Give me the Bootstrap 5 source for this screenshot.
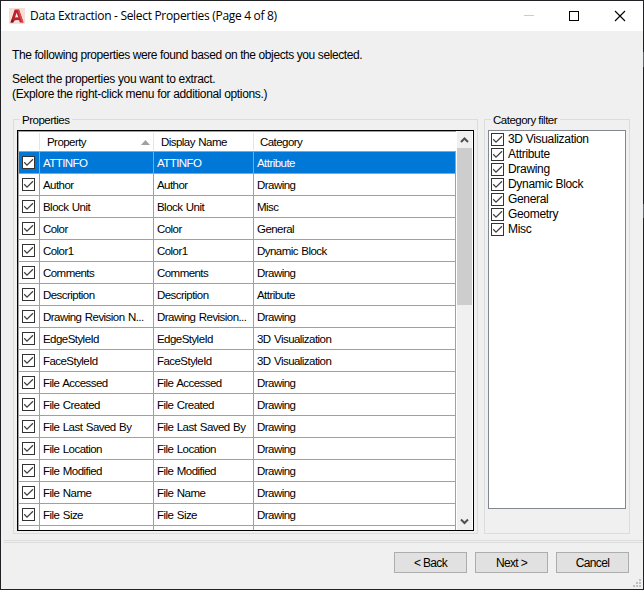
<!DOCTYPE html>
<html lang="en">
<head>
<meta charset="utf-8">
<title>Data Extraction</title>
<link href="https://cdn.jsdelivr.net/npm/bootstrap@5.3.0/dist/css/bootstrap.min.css" rel="stylesheet">
<style>
html,body{margin:0;overflow:hidden}
body{font:12px/15px "Liberation Sans",Arial,sans-serif;color:#000;background:#202025}
.win{width:644px;height:590px;padding:1px;background:#202025;letter-spacing:-.4px}
.client{background:#f0f0f0;padding-left:3px}
.titlebar{height:30px;padding:0 17px 0 8px}
.caption{font:12px/16px "Open Sans","Noto Sans",sans-serif;letter-spacing:-.31px;margin-left:5px}
.winbtns{gap:35px}
.winbtns svg{overflow:visible}
.intro{padding:17px 0 0 8px;height:88px}
.intro p{margin:0 0 9px;white-space:nowrap}
.intro p+p{letter-spacing:-.34px}
.boxes{padding-left:9px;gap:6px;height:421px}
.groupbox{border:1px solid #dcdcdc;height:415px;position:relative}
.groupbox legend{position:absolute;top:-7px;left:6px;width:auto;margin:0;padding:0 3px 0 2px;background:#f0f0f0;font-size:11.5px;line-height:15px;letter-spacing:-.5px;white-space:nowrap;float:none}
.g-props{width:465px;padding:10px 3px 2px}
.g-cats{width:146px;padding:10px 3px 0}
.gridbox{width:457px;height:401px;border:1px solid #000;background:#fff;overflow:hidden;font-size:11.5px;letter-spacing:-.55px;word-spacing:.8px}
.cells{width:438px;border-left:1px solid #a0a0a0;border-top:1px solid #a0a0a0}
.rowx{height:22px;border-bottom:1px solid #a0a0a0}
.rowx>div{border-right:1px solid #a0a0a0;height:22px;line-height:22px;padding-left:3px;white-space:nowrap}
.rowx.sel{background:#0078d7;color:#fff}
.rowx.head{height:20px}
.rowx.head>div{height:17px;margin-top:1px;border-color:#e5e5e5;line-height:19px;padding-left:7px}
.rowx.head>.c3{padding-left:6px}
.rowx.head>div:last-child{border-color:#fff}
.tri{margin:1px 3px 0 0}
.c0{width:21px}.c1{width:114px}.c2{width:100px}.c3{width:202px}
.rowx>.c0{padding:4px 0 0 3px}
.chk{display:block;width:13px;height:13px;flex:none}
.sbar{width:17px;background:#f0f0f0;border-left:1px solid #fff;border-right:1px solid #fff}
.thumb{height:157px;background:#cdcdcd}
.listbox{width:138px;height:379px;border:1px solid #828790;background:#fff;padding:1px 2px;letter-spacing:-.32px}
.listbox>div{height:15px;gap:4px;line-height:15px}
.sep{height:3px;border:solid #dcdcdc;border-width:1px 0;width:639px}
.actions{height:46px;padding:9px 14px 0 0;gap:8px}
.actions .btn{width:73px;height:21px;padding:1px 0 0;border:1px solid #adadad;border-radius:0;background:#e1e1e1;font:12px/19px "Liberation Sans",Arial,sans-serif;letter-spacing:-.65px;color:#000}
.grip{position:absolute;left:633px;top:579px}
.edge{position:absolute;left:643px;width:1px;background:#63636a}
.e1{top:52px;height:15px}.e2{top:204px;height:14px}
</style>
<script src="https://cdn.jsdelivr.net/npm/bootstrap@5.3.0/dist/js/bootstrap.bundle.min.js"></script>
</head>
<body>
<svg width="0" height="0" class="position-absolute"><symbol id="check" viewBox="0 0 13 13"><rect x=".5" y=".5" width="12" height="12" fill="#fff" stroke="#333"/><path d="M2.2 6.3 5 9.1 11 3.2" fill="none" stroke="#404040" stroke-width="1.25"/></symbol></svg>
<div class="win">
  <div class="titlebar bg-white d-flex align-items-center">
    <svg width="16" height="16" viewBox="0 0 16 16"><rect width="16" height="16" fill="#f6dfd8"/><path d="M1.5 14.5 5.7 1.5H10L14.5 14.5H10.8L10.2 12.2Q7.4 11.4 4.8 13L4.3 14.5Z" fill="#b9242c"/><path d="M7.6 4.8 6 9.6Q7.6 9.1 9.4 9.6Z" fill="#f9e8e3"/><path d="M1.5 14.5 4.3 14.5 4.8 13 3.2 10.5Z" fill="#7d1720"/><path d="M10 1.5 14.5 14.5H12.4L8.6 2Z" fill="#dc4648"/></svg>
    <span class="caption">Data Extraction - Select Properties (Page 4 of 8)</span>
    <div class="winbtns d-flex ms-auto">
      <svg width="10" height="10"><path d="M-1 4.5H9" stroke="#ccc"/></svg>
      <svg width="10" height="10"><rect x="-.5" y=".5" width="9" height="9" fill="none" stroke="#000"/></svg>
      <svg width="11" height="10"><path d="M0 0 10 10M10 0 0 10" stroke="#000" stroke-width="1.1"/></svg>
    </div>
  </div>
  <div class="client">
    <div class="intro">
      <p>The following properties were found based on the objects you selected.</p>
      <p>Select the properties you want to extract.<br>(Explore the right-click menu for additional options.)</p>
    </div>
    <div class="boxes d-flex">
      <fieldset class="groupbox g-props"><legend>Properties</legend>
        <div class="gridbox d-flex">
          <div class="cells" id="grid">
            <div class="rowx head d-flex"><div class="c0"></div><div class="c1 d-flex justify-content-between">Property<svg width="9" height="17" class="tri"><path d="M4.5 6 9 11H0Z" fill="#a0a0a0"/></svg></div><div class="c2">Display Name</div><div class="c3">Category</div></div>
          </div>
          <div class="sbar d-flex flex-column">
            <svg width="15" height="17"><path d="M4 11 7.5 7.5 11 11" fill="none" stroke="#505050" stroke-width="2"/></svg>
            <div class="thumb"></div>
            <svg class="mt-auto" width="15" height="17"><path d="M4 6.5 7.5 10 11 6.5" fill="none" stroke="#505050" stroke-width="2"/></svg>
          </div>
        </div>
      </fieldset>
      <fieldset class="groupbox g-cats"><legend>Category filter</legend>
        <div class="listbox" id="cats"></div>
      </fieldset>
    </div>
    <div class="sep"></div>
    <div class="actions d-flex justify-content-end">
      <button class="btn">&lt; Back</button><button class="btn">Next &gt;</button><button class="btn">Cancel</button>
    </div>
  </div>
</div>
<svg class="grip" width="9" height="9" fill="#bfbfbf"><path d="M6 0h2v2H6zM3 3h2v2H3zM6 3h2v2H6zM0 6h2v2H0zM3 6h2v2H3zM6 6h2v2H6z"/></svg>
<div class="edge e1"></div><div class="edge e2"></div>
<script>
const check='<svg class="chk"><use href="#check"/></svg>';
const rows=[["ATTINFO","Attribute"],["Author","Drawing"],["Block Unit","Misc"],["Color","General"],["Color1","Dynamic Block"],["Comments","Drawing"],["Description","Attribute"],["Drawing Revision N...","Drawing","Drawing Revision..."],["EdgeStyleId","3D Visualization"],["FaceStyleId","3D Visualization"],["File Accessed","Drawing"],["File Created","Drawing"],["File Last Saved By","Drawing"],["File Location","Drawing"],["File Modified","Drawing"],["File Name","Drawing"],["File Size","Drawing"],["","",""]];
document.getElementById('grid').insertAdjacentHTML('beforeend',rows.map((r,i)=>`<div class="rowx d-flex${i?'':' sel'}"><div class="c0">${r[0]?check:''}</div><div class="c1">${r[0]}</div><div class="c2">${r[2]??r[0]}</div><div class="c3">${r[1]}</div></div>`).join(''));
document.getElementById('cats').innerHTML=["3D Visualization","Attribute","Drawing","Dynamic Block","General","Geometry","Misc"].map(c=>`<div class="d-flex align-items-center">${check}<span>${c}</span></div>`).join('');
</script>
</body>
</html>
